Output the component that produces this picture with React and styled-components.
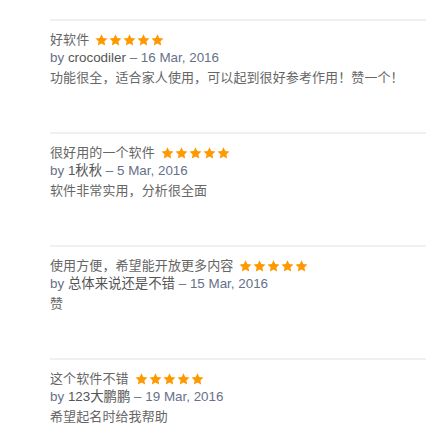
import React from 'react';
import styled, { createGlobalStyle } from 'styled-components';

const GlobalStyle = createGlobalStyle`
  body {
    margin: 0;
    background: #fff;
    font-family: "Liberation Sans", Arial, "Noto Sans CJK SC", sans-serif;
  }
`;

const reviews = [
  { title: '好软件', author: 'crocodiler', date: '16 Mar, 2016', text: '功能很全，适合家人使用，可以起到很好参考作用！赞一个！' },
  { title: '很好用的一个软件', author: '1秋秋', date: '5 Mar, 2016', text: '软件非常实用，分析很全面' },
  { title: '使用方便，希望能开放更多内容', author: '总体来说还是不错', date: '15 Mar, 2016', text: '赞' },
  { title: '这个软件不错', author: '123大鹏鹏', date: '19 Mar, 2016', text: '希望起名时给我帮助' },
];

const List = styled.div`
  padding: 19px 0 0 50px;
`;

const Review = styled.div`
  border-top: 2px solid #f0f0f0;
  padding: 10px 0 43px;

  &:last-child {
    padding-bottom: 10px;
  }
`;

const Title = styled.div`
  display: flex;
  align-items: center;
  gap: 6px;
  font-size: 13px;
  line-height: 18px;
  color: #666;
  letter-spacing: 0.1px;
`;

const Stars = styled.span`
  display: inline-flex;
  gap: 1px;
`;

const Meta = styled.div`
  font-size: 13.4px;
  line-height: 18px;
  color: #66718a;
`;

const Author = styled.span`
  color: #555;
`;

const Body = styled.div`
  font-size: 13px;
  line-height: 22px;
  color: #666;
  letter-spacing: 0.1px;
`;

const Star = () => (
  <svg width="13" height="12" viewBox="0 0 24 23">
    <path
      d="M12 0.5L15.41 7.81 23.41 8.79 17.52 14.29 19.05 22.21 12 18.3 4.95 22.21 6.48 14.29 0.59 8.79 8.59 7.81z"
      fill="#ff9900"
    />
  </svg>
);

export default function App() {
  return (
    <>
      <GlobalStyle />
      <List>
        {reviews.map((r) => (
          <Review key={r.title}>
            <Title>
              {r.title}
              <Stars>
                {[0, 1, 2, 3, 4].map((i) => (
                  <Star key={i} />
                ))}
              </Stars>
            </Title>
            <Meta>
              by <Author>{r.author}</Author> – {r.date}
            </Meta>
            <Body>{r.text}</Body>
          </Review>
        ))}
      </List>
    </>
  );
}
